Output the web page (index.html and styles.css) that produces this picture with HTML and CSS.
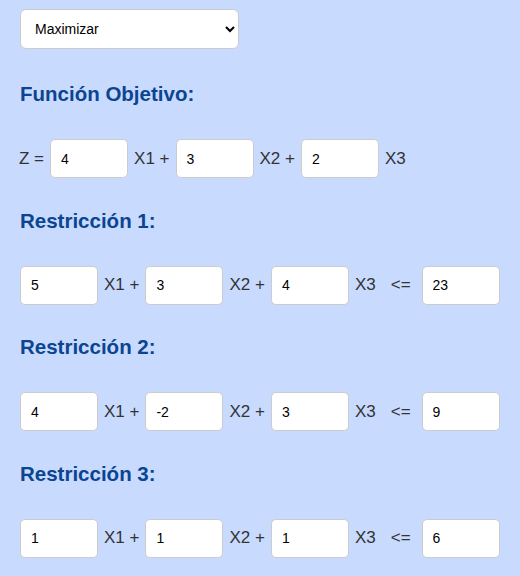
FILE: index.html
```html
<!DOCTYPE html>
<html lang="es">
<head>
<meta charset="utf-8">
<title>Programación Lineal</title>
<link rel="stylesheet" href="styles.css">
</head>
<body>
<select class="mode">
  <option>Maximizar</option>
  <option>Minimizar</option>
</select>

<h3 class="title">Función Objetivo:</h3>
<div class="row">
  <span class="lbl">Z =</span>
  <input class="num" type="text" value="4">
  <span class="lbl">X1 +</span>
  <input class="num" type="text" value="3">
  <span class="lbl">X2 +</span>
  <input class="num" type="text" value="2">
  <span class="lbl">X3</span>
</div>

<h3 class="title">Restricción 1:</h3>
<div class="row">
  <input class="num" type="text" value="5">
  <span class="lbl">X1 +</span>
  <input class="num" type="text" value="3">
  <span class="lbl">X2 +</span>
  <input class="num" type="text" value="4">
  <span class="lbl">X3</span>
  <span class="lbl op">&lt;=</span>
  <input class="num" type="text" value="23">
</div>

<h3 class="title">Restricción 2:</h3>
<div class="row">
  <input class="num" type="text" value="4">
  <span class="lbl">X1 +</span>
  <input class="num" type="text" value="-2">
  <span class="lbl">X2 +</span>
  <input class="num" type="text" value="3">
  <span class="lbl">X3</span>
  <span class="lbl op">&lt;=</span>
  <input class="num" type="text" value="9">
</div>

<h3 class="title">Restricción 3:</h3>
<div class="row">
  <input class="num" type="text" value="1">
  <span class="lbl">X1 +</span>
  <input class="num" type="text" value="1">
  <span class="lbl">X2 +</span>
  <input class="num" type="text" value="1">
  <span class="lbl">X3</span>
  <span class="lbl op">&lt;=</span>
  <input class="num" type="text" value="6">
</div>
</body>
</html>
```

FILE: styles.css
```css
html, body {
  background: #c9daff;
}
body {
  margin: 0;
  padding: 9px 20px 0 20px;
  font-family: "Liberation Sans", Arial, sans-serif;
  color: #333;
}
.mode {
  display: block;
  width: 219px;
  height: 40px;
  box-sizing: border-box;
  padding: 0 10px;
  border: 1px solid #ccc;
  border-radius: 6px;
  background: #fff;
  font-family: "Liberation Sans", Arial, sans-serif;
  font-size: 14px;
  color: #000;
  margin: 0 0 33px 0;
}
.title {
  margin: 0 0 33px 0;
  font-size: 20.5px;
  font-weight: bold;
  color: #0b4590;
}
.row {
  display: flex;
  align-items: center;
  gap: 6px;
  margin-bottom: 30.5px;
}
.lbl {
  font-size: 17px;
  color: #333;
  white-space: nowrap;
}
.row > .lbl:first-child {
  margin-left: -1px;
}
.op {
  margin-left: 9px;
  margin-right: 5px;
}
.num {
  width: 78px;
  height: 39px;
  box-sizing: border-box;
  padding: 0 10px;
  border: 1px solid #ccc;
  border-radius: 5px;
  background: #fff;
  font-family: "Liberation Sans", Arial, sans-serif;
  font-size: 14px;
  color: #000;
  outline: none;
}
```
